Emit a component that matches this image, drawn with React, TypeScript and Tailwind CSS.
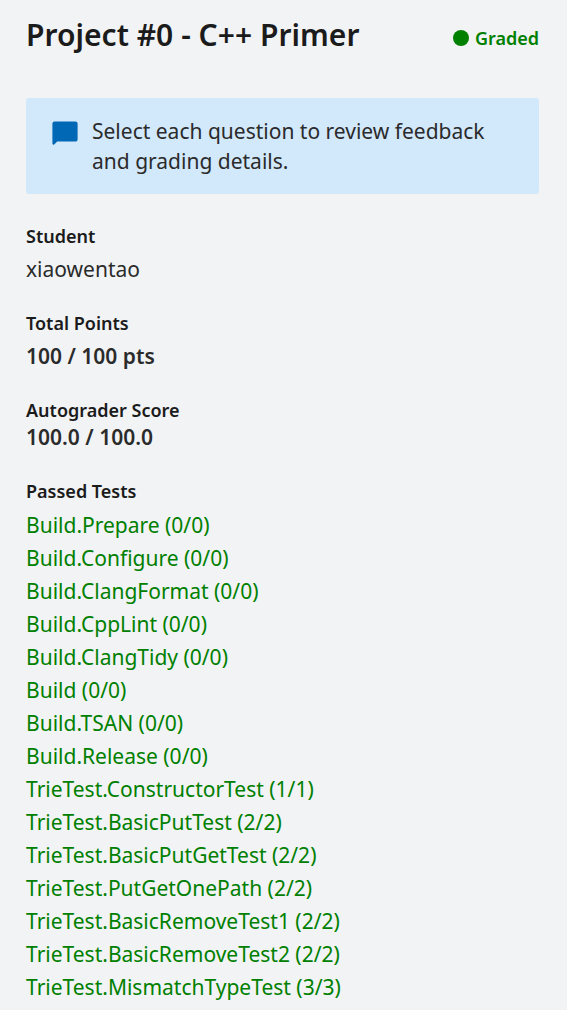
const tests = [
  "Build.Prepare (0/0)",
  "Build.Configure (0/0)",
  "Build.ClangFormat (0/0)",
  "Build.CppLint (0/0)",
  "Build.ClangTidy (0/0)",
  "Build (0/0)",
  "Build.TSAN (0/0)",
  "Build.Release (0/0)",
  "TrieTest.ConstructorTest (1/1)",
  "TrieTest.BasicPutTest (2/2)",
  "TrieTest.BasicPutGetTest (2/2)",
  "TrieTest.PutGetOnePath (2/2)",
  "TrieTest.BasicRemoveTest1 (2/2)",
  "TrieTest.BasicRemoveTest2 (2/2)",
  "TrieTest.MismatchTypeTest (3/3)",
];

export default function App() {
  return (
    <main className="h-[1010px] w-[567px] overflow-hidden bg-[#f1f3f5] pt-[15px] pr-7 pl-[26px] font-['Noto_Sans',sans-serif] text-[#1b1b1b]">
      <header className="flex h-10 items-center justify-between">
        <h1 className="text-[30px] leading-10 font-semibold tracking-[0.03px]">Project #0 - C++ Primer</h1>
        <div className="mt-1.5 flex items-center gap-1.5 text-[18px] leading-6 font-semibold text-[#008000]">
          <span className="size-4 rounded-full bg-[#008000]" />
          Graded
        </div>
      </header>
      <section className="mt-[43px] flex h-24 rounded-[3px] bg-[#d2e8fb] pt-[18px] pl-[26px]">
        <svg className="mt-[5px] h-6 w-[26px] shrink-0" viewBox="0 0 26 24" fill="#0068b5">
          <path d="M2.6 0.4H23.4Q25.6 0.4 25.6 2.6V18.4Q25.6 20.6 23.4 20.6H5.2L2.2 23.4Q0.4 24.2 0.4 22.5V2.6Q0.4 0.4 2.6 0.4Z" />
        </svg>
        <p className="ml-3.5 text-[21px] leading-[30px] text-[#2b2b2b]">
          Select each question to review feedback
          <br />
          and grading details.
        </p>
      </section>
      <section className="mt-[29px]">
        <h2 className="text-[18px] leading-[26px] font-semibold">Student</h2>
        <p className="mt-[5px] text-[21px] leading-[30px] text-[#2b2b2b]">xiaowentao</p>
      </section>
      <section className="mt-[26px]">
        <h2 className="text-[18px] leading-[26px] font-semibold">Total Points</h2>
        <p className="mt-[5px] text-[21px] leading-[30px] font-semibold text-[#2b2b2b]">100 / 100 pts</p>
      </section>
      <section className="mt-[26px]">
        <h2 className="text-[18px] leading-[26px] font-semibold">Autograder Score</h2>
        <p className="-mt-px text-[21px] leading-[30px] font-semibold text-[#2b2b2b]">100.0 / 100.0</p>
      </section>
      <section className="mt-[26px]">
        <h2 className="text-[18px] leading-[26px] font-semibold">Passed Tests</h2>
        <ul className="mt-[5px] text-[21px] leading-[33px] text-[#008000]">
          {tests.map((test) => (
            <li key={test}>{test}</li>
          ))}
        </ul>
      </section>
    </main>
  );
}
